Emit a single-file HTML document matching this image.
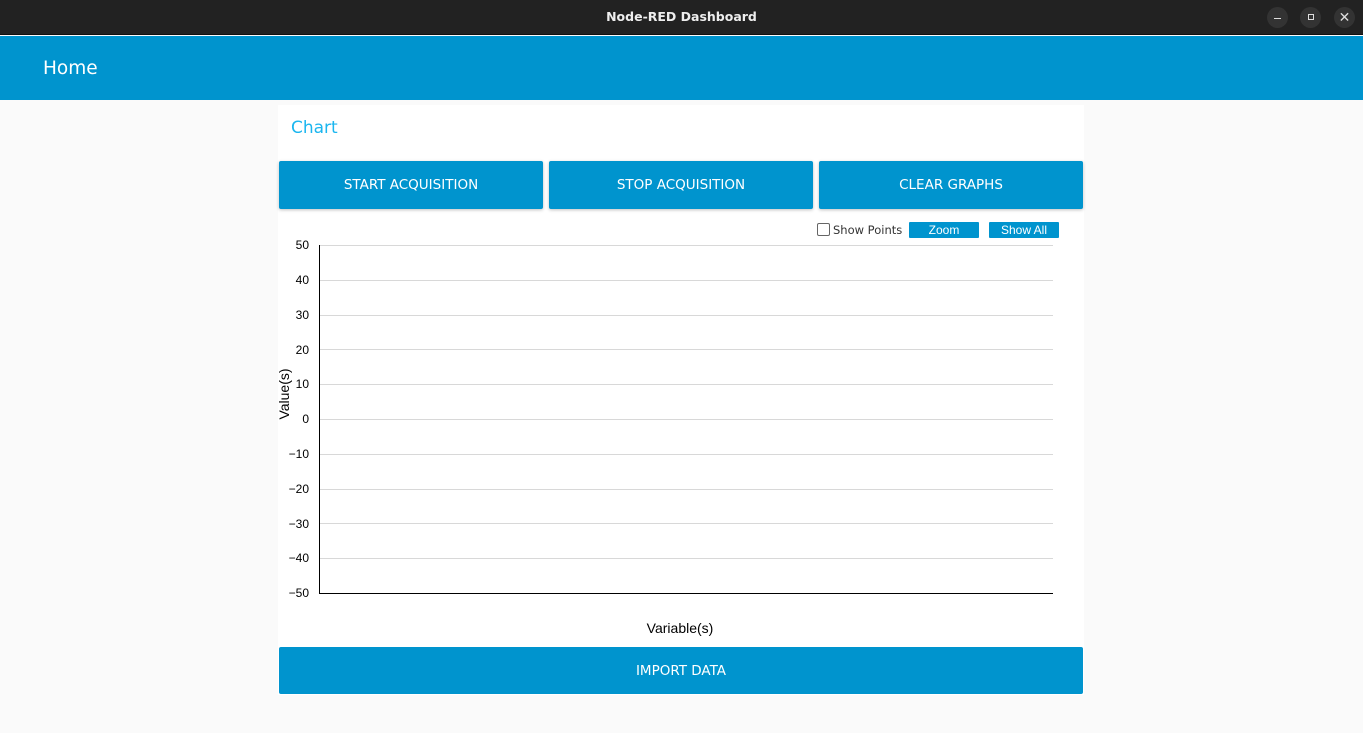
<!DOCTYPE html>
<html><head><meta charset="utf-8"><style>
*{margin:0;padding:0;box-sizing:border-box}
body{width:1363px;height:733px;background:#fafafa;font-family:"Liberation Sans",sans-serif;position:relative;overflow:hidden}
.tb{position:absolute;left:0;top:0;width:1363px;height:35px;background:#222;color:#eee;font-family:"DejaVu Sans","Liberation Sans",sans-serif;font-weight:bold;font-size:12.5px;text-align:center;line-height:34px;border-bottom:1px solid #111}
.wb{position:absolute;top:7px;width:21px;height:21px;border-radius:50%;background:#333}
.hd{position:absolute;left:0;top:36px;width:1363px;height:64px;background:#0094ce;color:#fff;font-family:"DejaVu Sans","Liberation Sans",sans-serif;font-size:18.5px;line-height:66px;padding-left:43px}
.card{position:absolute;left:278px;top:105px;width:806px;height:590px;background:#fff}
.ct{position:absolute;left:291px;top:118px;color:#1bb6ef;font-family:"DejaVu Sans","Liberation Sans",sans-serif;font-size:17px}
.btn{position:absolute;background:#0094ce;color:#fff;font-family:"DejaVu Sans","Liberation Sans",sans-serif;font-size:13.5px;text-align:center;border-radius:2px;box-shadow:0 1px 3px rgba(0,0,0,.25)}
.sb{position:absolute;top:222px;height:16px;background:#0094ce;color:#fff;font-size:12px;text-align:center;line-height:16px;border-radius:1px}
</style></head><body>
<div class="tb">Node-RED Dashboard</div>
<div class="wb" style="left:1267px"><div style="position:absolute;left:7px;top:11px;width:7px;height:1px;background:#ddd"></div></div>
<div class="wb" style="left:1300px"><div style="position:absolute;left:8px;top:7px;width:6px;height:6px;border:1px solid #ddd"></div></div>
<div class="wb" style="left:1334px;color:#ddd;font-size:14px;text-align:center;line-height:21px;font-weight:normal">✕</div>
<div class="hd">Home</div>
<div class="card"></div>
<div class="ct">Chart</div>
<div class="btn" style="left:279px;top:161px;width:264px;height:48px;line-height:48px">START ACQUISITION</div>
<div class="btn" style="left:549px;top:161px;width:264px;height:48px;line-height:48px">STOP ACQUISITION</div>
<div class="btn" style="left:819px;top:161px;width:264px;height:48px;line-height:48px">CLEAR GRAPHS</div>
<div style="position:absolute;left:817px;top:223px;width:13px;height:13px;border:1px solid #666;border-radius:2px;background:#fff"></div>
<div style="position:absolute;left:833px;top:222px;font-size:11.5px;color:#333;font-family:'DejaVu Sans','Liberation Sans',sans-serif;line-height:16px">Show Points</div>
<div class="sb" style="left:909px;width:70px">Zoom</div>
<div class="sb" style="left:989px;width:70px">Show All</div>
<svg style="position:absolute;left:0;top:0" width="1363" height="733" font-family="Liberation Sans, sans-serif" font-size="12" fill="#000">
<g stroke="#d8d8d8" stroke-width="1">
<line x1="319" x2="1053" y1="245.5" y2="245.5"/><line x1="319" x2="1053" y1="280.5" y2="280.5"/><line x1="319" x2="1053" y1="315.5" y2="315.5"/><line x1="319" x2="1053" y1="349.5" y2="349.5"/><line x1="319" x2="1053" y1="384.5" y2="384.5"/><line x1="319" x2="1053" y1="419.5" y2="419.5"/><line x1="319" x2="1053" y1="454.5" y2="454.5"/><line x1="319" x2="1053" y1="489.5" y2="489.5"/><line x1="319" x2="1053" y1="523.5" y2="523.5"/><line x1="319" x2="1053" y1="558.5" y2="558.5"/>
</g>
<line x1="319.5" y1="245" x2="319.5" y2="594" stroke="#000"/>
<line x1="319" y1="593.5" x2="1053" y2="593.5" stroke="#000"/>
<g text-anchor="end">
<text x="309" y="249">50</text><text x="309" y="284">40</text><text x="309" y="319">30</text><text x="309" y="354">20</text><text x="309" y="388">10</text><text x="309" y="423">0</text><text x="309" y="458">−10</text><text x="309" y="493">−20</text><text x="309" y="528">−30</text><text x="309" y="562">−40</text><text x="309" y="597">−50</text>
</g>
<text x="680" y="633" text-anchor="middle" font-size="14">Variable(s)</text>
<text transform="translate(289,394) rotate(-90)" text-anchor="middle" font-size="14">Value(s)</text>
</svg>
<div class="btn" style="left:279px;top:647px;width:804px;height:47px;line-height:48px;box-shadow:none">IMPORT DATA</div>
</body></html>
